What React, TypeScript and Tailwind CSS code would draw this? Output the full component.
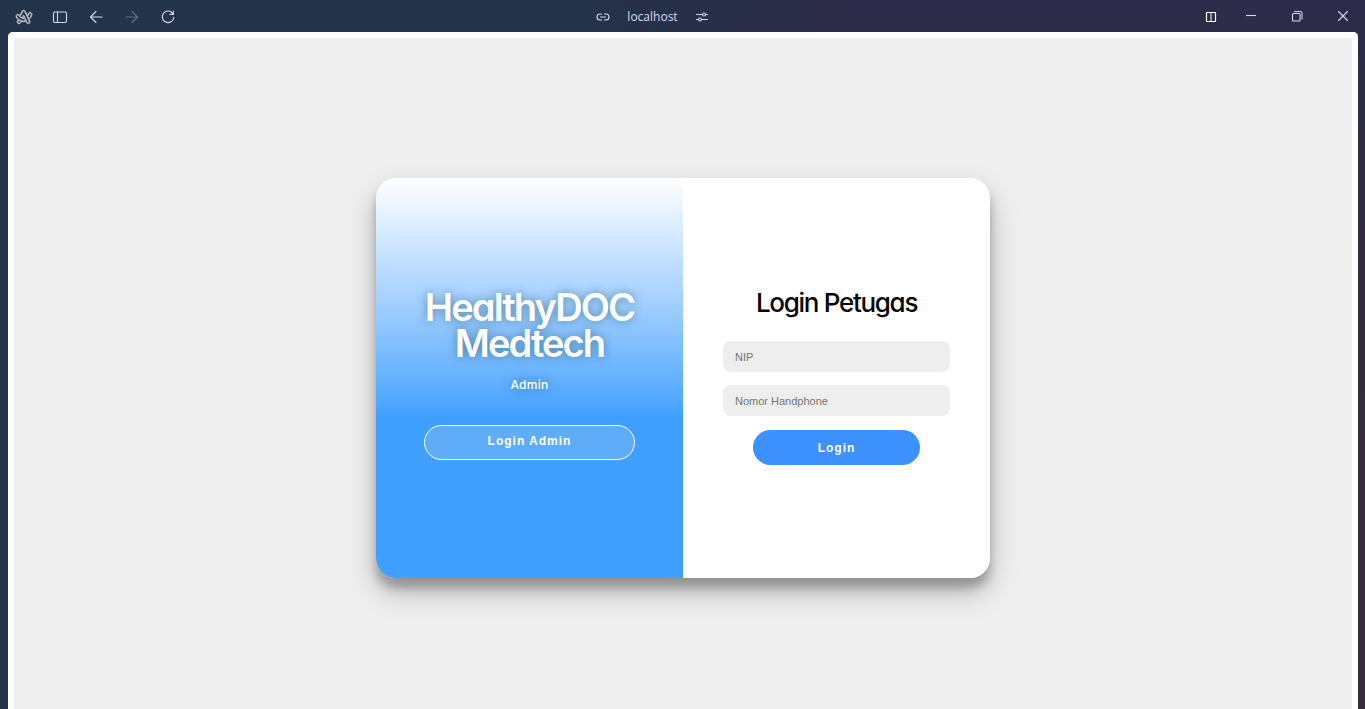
import type { ReactNode } from "react";
import { SiArc } from "react-icons/si";

type IconProps = { children: ReactNode };

function Icon({ children }: IconProps) {
  return (
    <svg viewBox="0 0 16 16" className="size-4" fill="none" stroke="currentColor" strokeWidth="1.1" strokeLinecap="round" strokeLinejoin="round" aria-hidden="true">
      {children}
    </svg>
  );
}

type BarButtonProps = { label: string; children: ReactNode; disabled?: boolean };

function BarButton({ label, children, disabled }: BarButtonProps) {
  return (
    <button type="button" aria-label={label} disabled={disabled} className="flex size-4 items-center justify-center text-[#d9d5f5] disabled:text-[#66708c]">
      {children}
    </button>
  );
}

function TitleBar() {
  return (
    <header className="grid h-8 grid-cols-[1fr_auto_1fr] items-center pt-px pr-3.5 pl-4">
      <nav aria-label="Navigation" className="flex gap-5">
        <BarButton label="Menu">
          <SiArc className="size-4 overflow-visible fill-none stroke-current stroke-[1.1] text-[#f0eef0]" />
        </BarButton>
        <BarButton label="Sidebar">
          <Icon>
            <rect x="1.5" y="3" width="13" height="10.5" rx="1.5" />
            <path d="M5.5 3v10.5" />
          </Icon>
        </BarButton>
        <BarButton label="Back">
          <Icon>
            <path d="M14 8H2.5M8 2.5 2.5 8 8 13.5" />
          </Icon>
        </BarButton>
        <BarButton label="Forward" disabled>
          <Icon>
            <path d="M2 8h11.5M8 2.5 13.5 8 8 13.5" />
          </Icon>
        </BarButton>
        <BarButton label="Reload">
          <Icon>
            <path d="M13.2 5.2A5.8 5.8 0 1 0 13.8 8.2M13.4 2v3.4h-3.4" />
          </Icon>
        </BarButton>
      </nav>
      <div className="mr-[62px] flex items-center gap-4 text-[#d9d5f5]">
        <BarButton label="Copy link">
          <Icon>
            <path d="M6.5 5H5a3 3 0 0 0 0 6h1.500M9.500 5H11a3 3 0 0 1 0 6H9.500M5.500 8h5" />
          </Icon>
        </BarButton>
        <span className="font-['Open_Sans',sans-serif] text-xs">localhost</span>
        <BarButton label="Site settings">
          <Icon>
            <path d="M2.500 5.500h6M11.500 5.500h2M2.500 10.500h2M7.500 10.500h6" />
            <circle cx="10" cy="5.500" r="1.500" />
            <circle cx="6" cy="10.500" r="1.500" />
          </Icon>
        </BarButton>
      </div>
      <div className="flex items-center justify-end">
        <div className="mr-6 flex">
          <BarButton label="Split view">
            <svg viewBox="0 0 16 16" className="size-4" fill="none" stroke="#ffffff" aria-hidden="true">
              <rect x="3.500" y="3.500" width="9" height="9" rx="0.500" strokeWidth="1.200" />
              <path d="M8 3.500v9" />
            </svg>
          </BarButton>
        </div>
        <div className="flex gap-[30px]">
          <BarButton label="Minimize">
            <Icon>
              <path d="M3 6.500h10" strokeLinecap="butt" />
            </Icon>
          </BarButton>
          <BarButton label="Restore">
            <Icon>
              <rect x="3.500" y="4.500" width="7.500" height="7.500" rx="1" />
              <path d="M5.500 2.500h5.500a2 2 0 0 1 2 2v5.500" />
            </Icon>
          </BarButton>
          <BarButton label="Close">
            <Icon>
              <path d="m3.500 2.500 9 9M12.500 2.500l-9 9" />
            </Icon>
          </BarButton>
        </div>
      </div>
    </header>
  );
}

function AdminPanel() {
  return (
    <section className="flex flex-1 flex-col items-center justify-center bg-linear-to-b from-white to-[#3fa0ff] to-60% px-10 pb-2 text-center text-white">
      <h1 className="font-['Inter',sans-serif] text-[38px] leading-9 font-semibold tracking-tighter [font-feature-settings:'cv11'] [text-shadow:0_0_10px_rgb(16_64_74/0.5)]">
        HealthyDOC Medtech
      </h1>
      <p className="mt-3.5 mb-[30px] font-['Inter',sans-serif] text-xs leading-5 font-medium tracking-wide [font-feature-settings:'cv11'] [text-shadow:0_0_10px_rgb(16_64_74/0.5)]">Admin</p>
      <button type="button" className="h-[35px] w-[211px] rounded-[20px] border border-white bg-[#e1e1e1]/20 pb-0.5 font-['Liberation_Sans',sans-serif] text-xs font-bold tracking-[1px]">
        Login Admin
      </button>
    </section>
  );
}

type FieldProps = { label: string; name: string; type: string };

function Field({ label, name, type }: FieldProps) {
  return (
    <input
      aria-label={label}
      name={name}
      type={type}
      placeholder={label}
      className="h-[31px] w-full rounded-lg bg-[#eee] px-3 font-['Liberation_Sans',sans-serif] text-[11px] text-black outline-none placeholder:text-[#757575]"
    />
  );
}

function OfficerForm() {
  return (
    <form className="flex flex-1 flex-col items-center justify-center bg-white px-10 pb-1.5" onSubmit={(event) => event.preventDefault()}>
      <h2 className="mb-5 font-['Inter',sans-serif] text-[26px] leading-9 font-medium tracking-tighter text-black [font-feature-settings:'cv11']">Login Petugas</h2>
      <div className="flex w-full flex-col gap-[13px]">
        <Field label="NIP" name="nip" type="text" />
        <Field label="Nomor Handphone" name="phone" type="tel" />
      </div>
      <button type="submit" className="mt-3.5 h-[35px] w-[167px] rounded-[20px] bg-[#3c91ff] font-['Liberation_Sans',sans-serif] text-xs font-bold tracking-[1px] text-white">
        Login
      </button>
    </form>
  );
}

export default function App() {
  return (
    <div className="flex h-screen flex-col overflow-hidden bg-[linear-gradient(90deg,#24344a_0%,#24344a_40%,#30294400_62%),linear-gradient(180deg,#2c2b49_0%,#352d3a_60%)]">
      <TitleBar />
      <main className="mr-[7px] ml-2 flex flex-1 items-center justify-center rounded-t-[5px] border-6 border-b-0 border-white bg-[#efefef] pt-[9px]">
        <div className="flex min-h-[400px] w-full max-w-[614px] overflow-hidden rounded-[20px] shadow-[0_14px_28px_rgb(0_0_0/0.25),0_10px_10px_rgb(0_0_0/0.22)]">
          <AdminPanel />
          <OfficerForm />
        </div>
      </main>
    </div>
  );
}
